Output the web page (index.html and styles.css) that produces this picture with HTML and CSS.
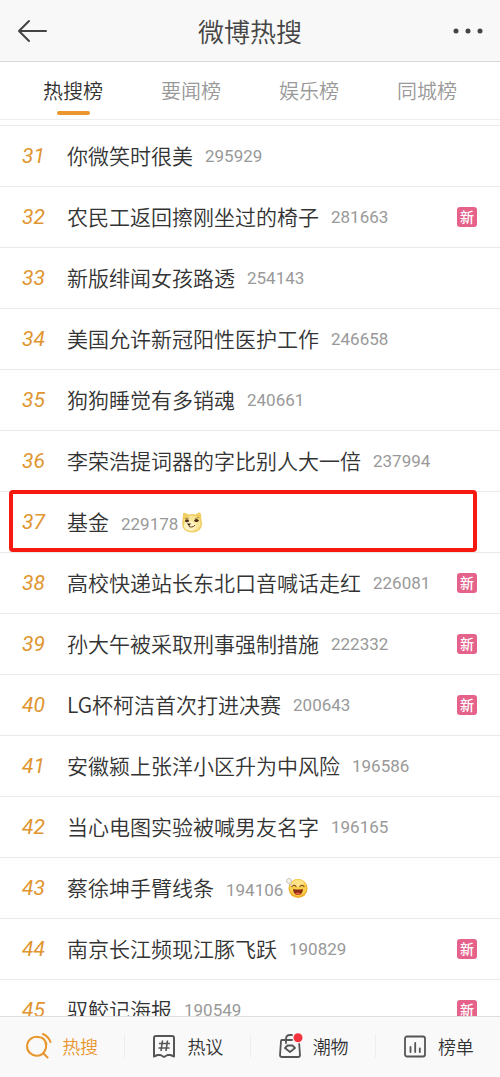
FILE: index.html
```
<!DOCTYPE html>
<html lang="zh-CN">
<head>
    <meta charset="UTF-8">
    <meta name="viewport" content="width=device-width, initial-scale=1.0">
    <title>微博热搜</title>
    <link rel="stylesheet" href="styles.css">
</head>
<body>
    <header class="header">
        <button class="icon-btn" type="button" aria-label="返回">
            <svg width="30" height="24" viewBox="0 0 30 24" fill="none" stroke="#444" stroke-width="2" stroke-linecap="round" stroke-linejoin="round">
                <path d="M12 2 2 12l10 10M2 12h27"/>
            </svg>
        </button>
        <h1>微博热搜</h1>
        <button class="icon-btn" type="button" aria-label="更多">
            <svg width="30" height="24" viewBox="0 0 30 24" fill="#444">
                <circle cx="3" cy="12" r="2.500"/>
                <circle cx="15" cy="12" r="2.500"/>
                <circle cx="27" cy="12" r="2.500"/>
            </svg>
        </button>
    </header>
    <nav class="tabs">
        <a class="active" href="#">热搜榜</a>
        <a href="#">要闻榜</a>
        <a href="#">娱乐榜</a>
        <a href="#">同城榜</a>
    </nav>
    <main class="content">
        <ol class="list">
            <li class="row"><span class="rank">31</span><a class="title" href="#">你微笑时很美</a><span class="count">295929</span></li>
            <li class="row"><span class="rank">32</span><a class="title" href="#">农民工返回擦刚坐过的椅子</a><span class="count">281663</span><span class="tag">新</span></li>
            <li class="row"><span class="rank">33</span><a class="title" href="#">新版绯闻女孩路透</a><span class="count">254143</span></li>
            <li class="row"><span class="rank">34</span><a class="title" href="#">美国允许新冠阳性医护工作</a><span class="count">246658</span></li>
            <li class="row"><span class="rank">35</span><a class="title" href="#">狗狗睡觉有多销魂</a><span class="count">240661</span></li>
            <li class="row"><span class="rank">36</span><a class="title" href="#">李荣浩提词器的字比别人大一倍</a><span class="count">237994</span></li>
            <li class="row with-emoji marked">
                <span class="rank">37</span><a class="title" href="#">基金</a><span class="count">229178</span>
                <svg class="emoji" viewBox="0 0 22 22">
                    <path d="M2 3Q2.500 1 4.500 2L7.500 3.500Q11 2.500 14.500 3.500L17.500 1.500Q19.500 1 20 3.500L20.500 9Q22 13 20 17Q17 21.500 11 21.500Q4.500 21 2 17Q.5 13 1.500 9Z" fill="#f0ce62"/>
                    <path d="M3.500 9Q7 3.500 13 5Q19 6 19.500 12Q19 19 12 20Q5 20 3 15Z" fill="#fae69a"/>
                    <ellipse cx="9" cy="15" rx="6" ry="4.500" fill="#fff3c2"/>
                    <path d="M4 7.500 8 7M14 7.500l4-1" stroke="#a98332" stroke-width="1"/>
                    <ellipse cx="6" cy="9.700" rx="2" ry="1.500" fill="#4a2d1a"/>
                    <ellipse cx="15.500" cy="9.500" rx="2.200" ry="1.500" fill="#4a2d1a"/>
                    <path d="M6 12.500h4l-2 2.500Z" fill="#3b2114"/>
                    <path d="M8 14.500q0 2 2.500 1.500 2.500 0 3.500-2" fill="none" stroke="#6b3f22" stroke-width="1"/>
                </svg>
            </li>
            <li class="row"><span class="rank">38</span><a class="title" href="#">高校快递站长东北口音喊话走红</a><span class="count">226081</span><span class="tag">新</span></li>
            <li class="row"><span class="rank">39</span><a class="title" href="#">孙大午被采取刑事强制措施</a><span class="count">222332</span><span class="tag">新</span></li>
            <li class="row"><span class="rank">40</span><a class="title" href="#">LG杯柯洁首次打进决赛</a><span class="count">200643</span><span class="tag">新</span></li>
            <li class="row"><span class="rank">41</span><a class="title" href="#">安徽颍上张洋小区升为中风险</a><span class="count">196586</span></li>
            <li class="row"><span class="rank">42</span><a class="title" href="#">当心电图实验被喊男友名字</a><span class="count">196165</span></li>
            <li class="row with-emoji">
                <span class="rank">43</span><a class="title" href="#">蔡徐坤手臂线条</a><span class="count">194106</span>
                <svg class="emoji" viewBox="0 0 22 22">
                    <circle cx="12" cy="11.500" r="9.500" fill="#efae2c"/>
                    <circle cx="12" cy="10.500" r="8.500" fill="#fbd04c"/>
                    <ellipse cx="12" cy="6.500" rx="6" ry="3.500" fill="#fde287"/>
                    <path d="M6 9.500q2-2.500 4 0M14 9.500q2-2.500 4 0" fill="none" stroke="#7a4417" stroke-width="1.200" stroke-linecap="round"/>
                    <path d="M7 12q5 1 10 0-.5 6-5 6t-5-6Z" fill="#8a2c12"/>
                    <path d="M9 16.500q3-2 6 0-3 2.500-6 0Z" fill="#e8603c"/>
                    <circle cx="3" cy="4" r="2.500" fill="#f6f3ea" stroke="#c9c6bd"/>
                    <path d="M4 6.500 6 9" stroke="#d8d2c0" stroke-width="2"/>
                </svg>
            </li>
            <li class="row"><span class="rank">44</span><a class="title" href="#">南京长江频现江豚飞跃</a><span class="count">190829</span><span class="tag">新</span></li>
            <li class="row"><span class="rank">45</span><a class="title" href="#">驭鲛记海报</a><span class="count">190549</span><span class="tag">新</span></li>
        </ol>
    </main>
    <nav class="bottom-nav">
        <a class="active" href="#">
            <svg width="26" height="26" viewBox="0 0 26 26" fill="none" stroke="#e8962e" stroke-width="2" stroke-linecap="round">
                <path d="M13.500 4.200A9.500 9.500 0 1 0 19.500 10"/>
                <path d="M17.500 20.500 21.500 24.500M15 4.500Q19 6 20.500 11M17 1Q22.500 3.500 24.500 9"/>
            </svg>
            热搜
        </a>
        <a href="#">
            <svg width="26" height="26" viewBox="0 0 26 26" fill="none" stroke="#555" stroke-width="2" stroke-linejoin="round">
                <path d="M5 3h16q2 0 2 2v18.500l-3.500-1.500h-3L13 24l-3.500-2h-3L3 23.500V5q0-2 2-2Z"/>
                <path d="M11.500 7.500 10 18M16.500 7.500 15 18M8 10.500h11M7.500 15h11" stroke-width="1.600"/>
            </svg>
            热议
        </a>
        <a href="#">
            <svg width="26" height="26" viewBox="0 0 26 26" fill="none" stroke="#555" stroke-width="1.800" stroke-linecap="round" stroke-linejoin="round">
                <path d="M15 7H5q-1 0-1 1L3 22q0 2 2 2h16q2 0 2-2l-.8-11"/>
                <path d="M9 10V6q0-4 4-4h2"/>
                <path d="M10.500 12.500h5l2.500 2.500-5 4-5-4Z"/>
                <circle cx="21" cy="4.800" r="4.500" fill="#f5333f" stroke="none"/>
            </svg>
            潮物
        </a>
        <a href="#">
            <svg width="26" height="26" viewBox="0 0 26 26" fill="none" stroke="#555" stroke-width="1.800" stroke-linecap="round">
                <rect x="3" y="3.500" width="20" height="20" rx="2"/>
                <path d="M8.500 14v5M13.200 10v9M17.800 15.500V19"/>
            </svg>
            榜单
        </a>
    </nav>
</body>
</html>
```
FILE: styles.css
```
* {
    box-sizing: border-box;
}
body {
    display: flex;
    flex-direction: column;
    height: 100vh;
    margin: 0;
    font-family: "Noto Sans CJK SC", sans-serif;
    font-weight: 350;
    color: #333;
    background-color: #fff;
}
a {
    color: inherit;
    text-decoration: none;
}
.header {
    display: flex;
    align-items: center;
    justify-content: space-between;
    height: 62px;
    padding: 0 17px;
    background-color: #f8f8f8;
    border-bottom: 1px solid #d8d8d8;
}
.header h1 {
    margin: 0;
    font-size: 26px;
    font-weight: 350;
    color: #444;
}
.icon-btn {
    display: flex;
    padding: 0;
    border: none;
    background: none;
    cursor: pointer;
}
.tabs {
    display: flex;
    height: 58px;
    padding: 0 14px;
    border-bottom: 1px solid #eee;
}
.tabs a {
    display: flex;
    flex: 1;
    flex-direction: column;
    align-items: center;
    padding-top: 14px;
    font-size: 20px;
    line-height: 30px;
    color: #999;
}
.tabs .active {
    color: #333;
}
.tabs .active::after {
    content: "";
    width: 33px;
    height: 4px;
    margin-top: 5px;
    border-radius: 2px;
    background-color: #ea962a;
}
.content {
    flex: 1;
    min-height: 0;
    padding-top: 5px;
    overflow: hidden;
}
.list {
    margin: 0;
    padding: 0;
    list-style: none;
}
.row {
    position: relative;
    display: flex;
    align-items: center;
    height: 61px;
    padding: 0 23px 1px 22px;
    border-top: 1px solid #e9e9e9;
}
.rank,
.count {
    font-family: Roboto, sans-serif;
    font-weight: 400;
}
.rank {
    width: 45px;
    font-size: 21px;
    font-style: italic;
    color: #e0952f;
}
.title {
    padding-bottom: 2px;
    font-size: 21px;
}
.count {
    margin-left: 12px;
    font-size: 17px;
    color: #999;
}
.tag {
    width: 20px;
    height: 20px;
    margin-left: auto;
    border-radius: 3px;
    background-color: #e5628a;
    font-size: 14px;
    font-weight: 500;
    line-height: 18px;
    text-align: center;
    color: #fff;
}
.emoji {
    width: 22px;
    height: 22px;
    margin-left: 3px;
}
.with-emoji .count {
    padding-top: 5px;
}
.marked::after {
    content: "";
    position: absolute;
    inset: -2px 23px 0 9px;
    border: 4px solid #f5190f;
    border-radius: 4px;
}
.bottom-nav {
    display: flex;
    align-items: center;
    height: 61px;
    padding-bottom: 2px;
    background-color: #faf9fa;
    border-top: 1px solid #ddd;
}
.bottom-nav a {
    display: flex;
    flex: 1;
    align-items: center;
    justify-content: center;
    gap: 10px;
    height: 24px;
    font-size: 18px;
}
.bottom-nav a + a {
    border-left: 1px solid #eee;
}
.bottom-nav .active {
    color: #e8962e;
}
```
